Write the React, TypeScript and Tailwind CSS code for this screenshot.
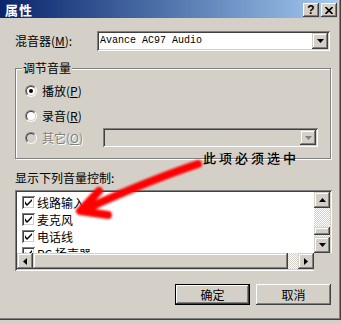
import React from "react";

function TriDown({ color = "#000" }: { color?: string }) {
  return (
    <svg width="7" height="4" viewBox="0 0 7 4" className="block">
      <polygon points="0,0 7,0 3.5,4" fill={color} />
    </svg>
  );
}
function TriUp() {
  return (
    <svg width="7" height="4" viewBox="0 0 7 4" className="block">
      <polygon points="0,4 7,4 3.5,0" fill="#000" />
    </svg>
  );
}
function TriLeft() {
  return (
    <svg width="4" height="7" viewBox="0 0 4 7" className="block">
      <polygon points="4,0 4,7 0,3.5" fill="#000" />
    </svg>
  );
}
function TriRight() {
  return (
    <svg width="4" height="7" viewBox="0 0 4 7" className="block">
      <polygon points="0,0 0,7 4,3.5" fill="#000" />
    </svg>
  );
}

function Radio({ checked, disabled }: { checked?: boolean; disabled?: boolean }) {
  return (
    <span className="relative block w-[12px] h-[12px] shrink-0 rounded-full border border-t-[#808080] border-l-[#808080] border-b-white border-r-white">
      <span
        className={
          disabled
            ? "absolute inset-0 rounded-full border border-t-[#404040] border-l-[#404040] border-b-[#d4d0c8] border-r-[#d4d0c8] bg-[#d4d0c8] flex items-center justify-center"
            : "absolute inset-0 rounded-full border border-t-[#404040] border-l-[#404040] border-b-[#d4d0c8] border-r-[#d4d0c8] bg-white flex items-center justify-center"
        }
      >
        {checked ? <span className="block w-[4px] h-[4px] rounded-full bg-black" /> : null}
      </span>
    </span>
  );
}

function Check() {
  return (
    <span className="block w-[13px] h-[13px] shrink-0 bg-white shadow-[inset_1px_1px_#808080,inset_-1px_-1px_#ffffff,inset_2px_2px_#404040,inset_-2px_-2px_#d4d0c8] flex items-center justify-center">
      <svg width="7" height="7" viewBox="0 0 7 7" className="block">
        <path d="M0 2 L0 5 L2 7 L7 2 L7 0 L2 5 Z" fill="#000" />
      </svg>
    </span>
  );
}

const items = ["线路输入", "麦克风", "电话线", "PC 扬声器"];

export default function App() {
  return (
    <div className="relative w-[341px] h-[324px] bg-[#d4d0c8] overflow-hidden font-['Noto_Sans_CJK_SC','Noto_Sans',sans-serif] text-[12px] leading-[14px] text-black">
      <div className="flex flex-col w-[341px] h-[320px] shadow-[inset_-1px_-1px_#404040,inset_-2px_-2px_#808080]">
        {/* title bar */}
        <div className="flex items-center justify-between w-[338px] h-[18px] pt-[2px] pl-[5px] pr-[1px] bg-linear-to-r from-[#0a246a] to-[#a6caf0]">
          <span className="text-white font-bold text-[13px] leading-[14px] tracking-[1px]">属性</span>
          <div className="flex gap-[2px]">
            <span className="flex items-center justify-center w-[16px] h-[14px] bg-[#d4d0c8] shadow-[inset_-1px_-1px_#404040,inset_1px_1px_#ffffff,inset_-2px_-2px_#808080] font-['Liberation_Sans',sans-serif] font-bold text-[12px] leading-[12px]">
              ?
            </span>
            <span className="flex items-center justify-center w-[16px] h-[14px] bg-[#d4d0c8] shadow-[inset_-1px_-1px_#404040,inset_1px_1px_#ffffff,inset_-2px_-2px_#808080]">
              <svg width="8" height="7" viewBox="0 0 8 7" className="block">
                <path d="M0.5 0 L7.5 7 M7.5 0 L0.5 7" stroke="#000" strokeWidth="1.6" />
              </svg>
            </span>
          </div>
        </div>

        <div className="flex flex-col pl-[15px]">
          {/* mixer row */}
          <div className="mt-[13px] flex items-center h-[20px]">
            <span className="w-[82px]">
              混音器(<u>M</u>):
            </span>
            <div className="flex items-center justify-between w-[233px] h-[20px] bg-white pl-[3px] pr-[2px] shadow-[inset_1px_1px_#808080,inset_-1px_-1px_#ffffff,inset_2px_2px_#404040,inset_-2px_-2px_#d4d0c8]">
              <span className="font-['Liberation_Mono',monospace] text-[10px] leading-[12px]">Avance AC97 Audio</span>
              <span className="flex items-center justify-center w-[16px] h-[16px] bg-[#d4d0c8] shadow-[inset_-1px_-1px_#404040,inset_1px_1px_#d4d0c8,inset_-2px_-2px_#808080,inset_2px_2px_#ffffff]">
                <TriDown />
              </span>
            </div>
          </div>

          {/* group box */}
          <div className="relative mt-[17px] w-[316px] h-[91px] border border-[#808080] shadow-[1px_1px_0_#ffffff,inset_1px_1px_0_#ffffff]">
            <span className="absolute -top-[8px] left-[6px] px-[1px] bg-[#d4d0c8]">调节音量</span>
            <div className="flex flex-col pl-[9px]">
              <div className="mt-[13px] h-[18px] flex items-center gap-[5px]">
                <Radio checked />
                <span>
                  播放(<u>P</u>)
                </span>
              </div>
              <div className="mt-[7px] h-[18px] flex items-center gap-[5px]">
                <Radio />
                <span>
                  录音(<u>R</u>)
                </span>
              </div>
              <div className="mt-[3px] h-[19px] flex items-center">
                <div className="w-[78px] flex items-center gap-[5px]">
                  <Radio disabled />
                  <span className="text-[#808080] [text-shadow:1px_1px_0_#ffffff]">
                    其它(<u>O</u>)
                  </span>
                </div>
                <div className="flex items-center justify-end w-[215px] h-[19px] bg-[#d4d0c8] pr-[2px] shadow-[inset_1px_1px_#808080,inset_-1px_-1px_#ffffff,inset_2px_2px_#404040,inset_-2px_-2px_#d4d0c8]">
                  <span className="flex items-center justify-center w-[16px] h-[15px] bg-[#d4d0c8] shadow-[inset_-1px_-1px_#404040,inset_1px_1px_#d4d0c8,inset_-2px_-2px_#808080,inset_2px_2px_#ffffff]">
                    <TriDown color="#808080" />
                  </span>
                </div>
              </div>
            </div>
          </div>

          <div className="mt-[12px]">显示下列音量控制:</div>

          {/* list box */}
          <div className="relative mt-[5px] w-[317px] h-[81px] p-[2px] shadow-[inset_1px_1px_#808080,inset_-1px_-1px_#ffffff,inset_2px_2px_#404040,inset_-2px_-2px_#d4d0c8]">
            <div className="grid grid-cols-[297px_16px] grid-rows-[61px_16px] w-[313px] h-[77px]">
              <div className="bg-white overflow-hidden pt-[2px] pl-[5px] flex flex-col">
                {items.map((t) => (
                  <div key={t} className="h-[17px] shrink-0 flex items-center gap-[2px]">
                    <Check />
                    <span className="leading-[14px]">{t}</span>
                  </div>
                ))}
              </div>
              <div className="flex flex-col">
                <span className="flex items-center justify-center w-[16px] h-[16px] bg-[#d4d0c8] shadow-[inset_-1px_-1px_#404040,inset_1px_1px_#d4d0c8,inset_-2px_-2px_#808080,inset_2px_2px_#ffffff]">
                  <TriUp />
                </span>
                <span className="block h-[19px] bg-[repeating-conic-gradient(#d4d0c8_0_25%,#ffffff_0_50%)] bg-[length:2px_2px]" />
                <span className="block h-[8px] bg-[#d4d0c8] shadow-[inset_-1px_-1px_#404040,inset_1px_1px_#d4d0c8,inset_-2px_-2px_#808080,inset_2px_2px_#ffffff]" />
                <span className="block h-[2px] bg-[repeating-conic-gradient(#d4d0c8_0_25%,#ffffff_0_50%)] bg-[length:2px_2px]" />
                <span className="flex items-center justify-center w-[16px] h-[16px] bg-[#d4d0c8] shadow-[inset_-1px_-1px_#404040,inset_1px_1px_#d4d0c8,inset_-2px_-2px_#808080,inset_2px_2px_#ffffff]">
                  <TriDown />
                </span>
              </div>
              <div className="flex">
                <span className="flex items-center justify-center w-[16px] h-[16px] bg-[#d4d0c8] shadow-[inset_-1px_-1px_#404040,inset_1px_1px_#d4d0c8,inset_-2px_-2px_#808080,inset_2px_2px_#ffffff]">
                  <TriLeft />
                </span>
                <span className="block w-[255px] h-[16px] bg-[#d4d0c8] shadow-[inset_-1px_-1px_#404040,inset_1px_1px_#d4d0c8,inset_-2px_-2px_#808080,inset_2px_2px_#ffffff]" />
                <span className="block w-[10px] h-[16px] bg-[repeating-conic-gradient(#d4d0c8_0_25%,#ffffff_0_50%)] bg-[length:2px_2px]" />
                <span className="flex items-center justify-center w-[16px] h-[16px] bg-[#d4d0c8] shadow-[inset_-1px_-1px_#404040,inset_1px_1px_#d4d0c8,inset_-2px_-2px_#808080,inset_2px_2px_#ffffff]">
                  <TriRight />
                </span>
              </div>
              <div className="bg-[#d4d0c8]" />
            </div>
            <span className="absolute right-0 bottom-0 w-[18px] h-[18px] bg-[#d4d0c8]" />
          </div>

          {/* buttons */}
          <div className="mt-[13px] w-[316px] flex justify-end gap-[6px]">
            <button className="w-[75px] h-[21px] border border-black bg-[#d4d0c8] shadow-[inset_-1px_-1px_#404040,inset_1px_1px_#ffffff,inset_-2px_-2px_#808080] flex items-center justify-center">
              确定
            </button>
            <button className="w-[75px] h-[21px] bg-[#d4d0c8] shadow-[inset_-1px_-1px_#404040,inset_1px_1px_#ffffff,inset_-2px_-2px_#808080] flex items-center justify-center">
              取消
            </button>
          </div>
        </div>
      </div>

      {/* annotation */}
      <span className="absolute left-[203px] top-[150px] text-[13px] leading-[15px] tracking-[3px] font-medium text-black">
        此项必须选中
      </span>
      <svg width="341" height="324" viewBox="0 0 341 324" className="absolute left-0 top-0 pointer-events-none">
        <defs>
          <filter id="soft" x="-10%" y="-10%" width="120%" height="120%">
            <feGaussianBlur stdDeviation="0.9" />
          </filter>
        </defs>
        <g filter="url(#soft)" stroke="#ff0000" fill="none" strokeLinecap="round" strokeLinejoin="round">
          <path d="M198 164 Q150 180 88 208" strokeWidth="8" />
          <path d="M99 191 L80 211 L108 215" strokeWidth="8" />
        </g>
      </svg>
    </div>
  );
}
